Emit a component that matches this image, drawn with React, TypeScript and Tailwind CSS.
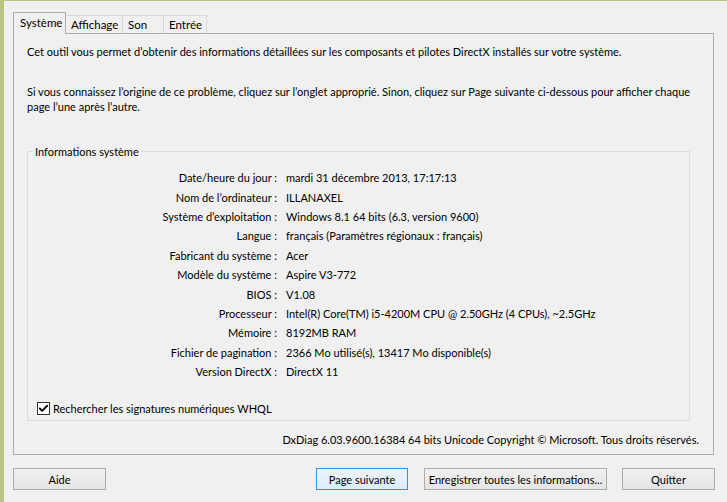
import { Check } from 'lucide-react';

const rows: [string, string][] = [
  ['Date/heure du jour :', 'mardi 31 décembre 2013, 17:17:13'],
  ['Nom de l’ordinateur :', 'ILLANAXEL'],
  ['Système d’exploitation :', 'Windows 8.1 64 bits (6.3, version 9600)'],
  ['Langue :', 'français (Paramètres régionaux : français)'],
  ['Fabricant du système :', 'Acer'],
  ['Modèle du système :', 'Aspire V3-772'],
  ['BIOS :', 'V1.08'],
  ['Processeur :', 'Intel(R) Core(TM) i5-4200M CPU @ 2.50GHz (4 CPUs), ~2.5GHz'],
  ['Mémoire :', '8192MB RAM'],
  ['Fichier de pagination :', '2366 Mo utilisé(s), 13417 Mo disponible(s)'],
  ['Version DirectX :', 'DirectX 11'],
];

const tabs = [
  { name: 'Système', w: 'w-[53px]' },
  { name: 'Affichage', w: 'w-[57px]' },
  { name: 'Son', w: 'w-[41px]' },
  { name: 'Entrée', w: 'w-[43px]' },
];

export default function App() {
  return (
    <div
      className="w-[727px] h-[502px] bg-[#f0f0f0] border-l-[4px] border-t border-[#b8c37e] text-[11px] text-black leading-[15px] overflow-hidden"
      style={{ fontFamily: '"Segoe UI", Lato, "Liberation Sans", sans-serif' }}
    >
      <div className="pt-[11px] pl-[9px] pr-[9px]">
        {/* tabs */}
        <div className="flex items-end h-[21px] relative z-10 whitespace-nowrap text-[11.5px]">
          {tabs.map((t, i) =>
            i === 0 ? (
              <div key={t.name} className={`${t.w} h-[22px] -mb-px bg-[#f0f0f0] border border-b-0 border-[#acacac] pl-[6px] pt-[2px]`}>
                {t.name}
              </div>
            ) : (
              <div key={t.name} className={`${t.w} h-[18px] bg-[#f0f0f0] border border-l-0 border-b-0 border-[#d9d9d9] pl-[5px] pt-[1px]`}>
                {t.name}
              </div>
            )
          )}
        </div>

        {/* panel */}
        <div className="w-[701px] h-[422px] border border-[#acacac] bg-[#f0f0f0] pl-[13px] pr-[13px] pt-[10px] flex flex-col">
          <p>Cet outil vous permet d’obtenir des informations détaillées sur les composants et pilotes DirectX installés sur votre système.</p>
          <p className="mt-[25px]">
            Si vous connaissez l’origine de ce problème, cliquez sur l’onglet approprié. Sinon, cliquez sur Page suivante ci-dessous pour afficher chaque page l’une après l’autre.
          </p>

          <fieldset className="mt-[30px] ml-0 mr-[10px] h-[277px] border border-[#dcdcdc]">
            <legend className="ml-[5px] px-[2px]">Informations système</legend>
            <div className="flex flex-col pt-[9px]">
              {rows.map(([k, v]) => (
                <div key={k} className="flex items-center h-[19.4px] whitespace-nowrap">
                  <span className="w-[249px] text-right">{k}</span>
                  <span className="ml-[9px]">{v}</span>
                </div>
              ))}
            </div>
            <div className="flex items-center mt-[20px] ml-[9px]">
              <span className="w-[13px] h-[13px] border border-[#333] bg-white flex items-center justify-center">
                <Check className="w-[11px] h-[11px]" strokeWidth={4} />
              </span>
              <span className="ml-[3px]">Rechercher les signatures numériques WHQL</span>
            </div>
          </fieldset>

          <div className="mt-[11px] text-right pr-[1px] whitespace-nowrap">
            DxDiag 6.03.9600.16384 64 bits Unicode Copyright © Microsoft. Tous droits réservés.
          </div>
        </div>

        {/* buttons */}
        <div className="flex mt-[13px] h-[22px] whitespace-nowrap">
          <button className="w-[93px] h-[22px] border border-[#acacac] bg-gradient-to-b from-[#f0f0f0] to-[#e5e5e5]">Aide</button>
          <button className="ml-[210px] w-[92px] h-[22px] border border-[#3c8fde] bg-gradient-to-b from-[#ecf4fc] to-[#dcecfc]">Page suivante</button>
          <button className="ml-[16px] w-[183px] h-[22px] border border-[#acacac] bg-gradient-to-b from-[#f0f0f0] to-[#e5e5e5]">Enregistrer toutes les informations...</button>
          <button className="ml-[15px] w-[93px] h-[22px] border border-[#acacac] bg-gradient-to-b from-[#f0f0f0] to-[#e5e5e5]">Quitter</button>
        </div>
      </div>
    </div>
  );
}
